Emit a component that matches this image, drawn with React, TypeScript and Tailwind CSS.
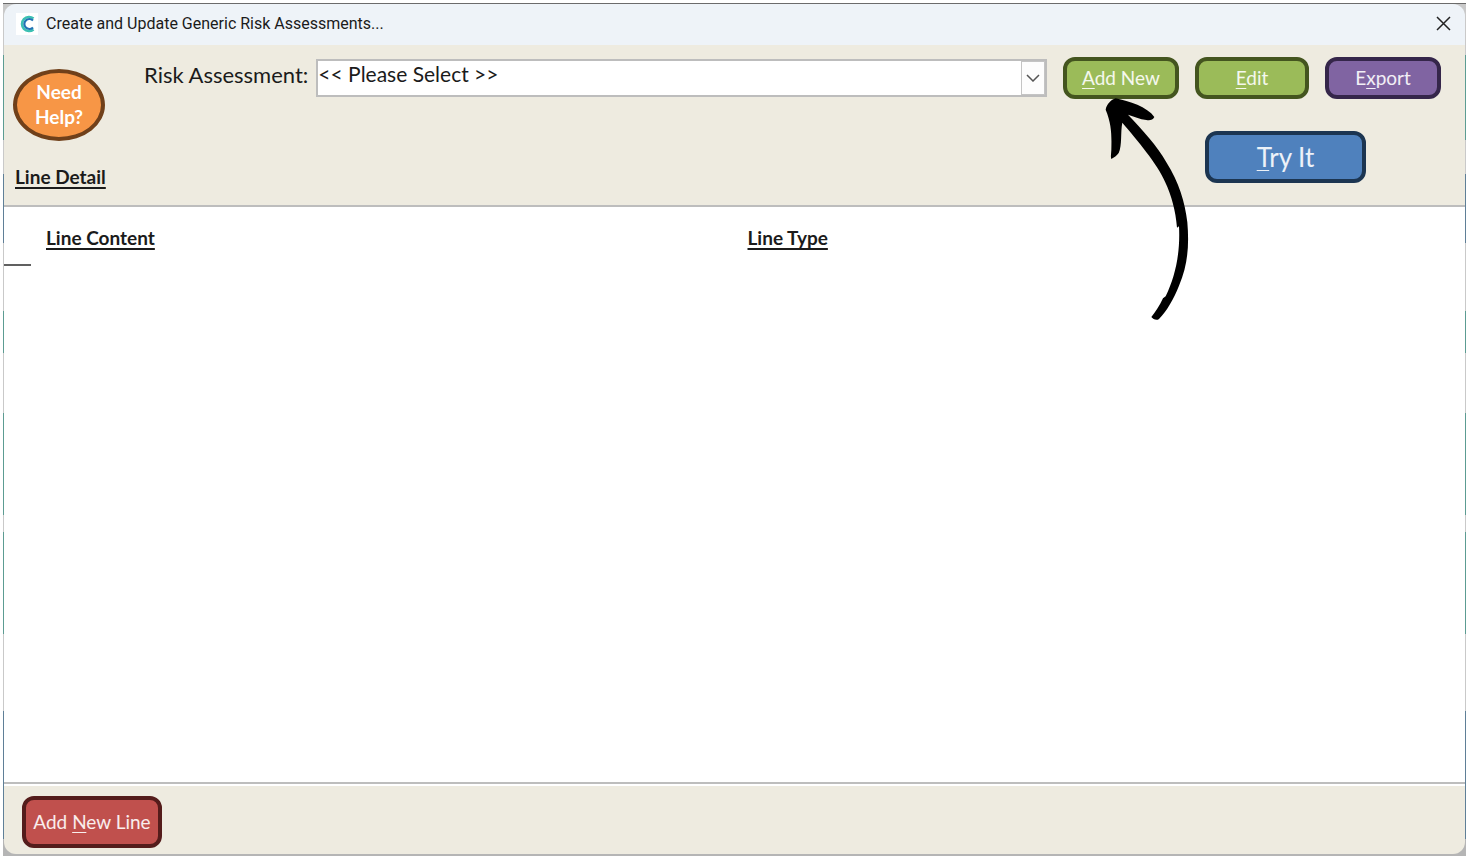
import React from "react";

interface ActionButtonProps {
  before?: string;
  accessKey: string;
  after: string;
  className: string;
}

const ActionButton: React.FC<ActionButtonProps> = ({
  before = "",
  accessKey,
  after,
  className,
}) => {
  return (
    <button
      type="button"
      accessKey={accessKey.toLowerCase()}
      className={`shrink-0 border-4 whitespace-pre text-white/90 ${className}`}
    >
      {before}
      <span className="underline decoration-1 underline-offset-3">{accessKey}</span>
      {after}
    </button>
  );
};

const TitleBar = () => {
  return (
    <header className="flex h-[41px] shrink-0 items-center bg-[#eef3f8] pr-2.5 pb-0.5 pl-3">
      <span className="flex h-[22px] w-[22px] items-center justify-center bg-white">
        <svg width="16" height="18" viewBox="0 0 16 18" fill="none">
          <path d="M14.5 3.6A7 7 0 1 0 14.5 14.4" stroke="#3cc0b3" strokeWidth="2.6" />
          <path d="M14 5.6A5 5 0 1 0 14 12.4" stroke="#2273b5" strokeWidth="2.2" />
        </svg>
      </span>
      <h1 className="ml-2 flex-1 font-['Roboto',sans-serif] text-base text-[#1b1b1b]">
        Create and Update Generic Risk Assessments...
      </h1>
      <button type="button" aria-label="Close" className="p-1">
        <svg width="15" height="15" viewBox="0 0 15 15" stroke="#222" strokeWidth="1.5">
          <path d="M1 1L14 14M14 1L1 14" />
        </svg>
      </button>
    </header>
  );
};

const PointerArrow = () => {
  return (
    <svg
      aria-hidden="true"
      className="pointer-events-none absolute top-[22px] left-4 z-10"
      width="140"
      height="260"
      viewBox="0 0 420 780"
    >
      <path d="M80 92C83 76 96 62 110 58C150 66 205 84 226 114C222 122 213 126 202 123C182 121 165 112 147 107C188 150 236 202 262 250C300 310 318 370 325 430C331 500 326 560 300 620C284 660 264 695 240 720C232 726 222 720 217 714C230 698 242 680 252 658L260 652C290 590 304 520 300 442L294 446C290 395 278 350 258 308C236 256 172 180 130 131C124 160 130 198 119 222C114 230 105 236 97 240C94 232 97 222 97 212C98 168 98 136 80 92Z" />
    </svg>
  );
};

const Toolbar = () => {
  return (
    <section className="flex shrink-0 border-b-2 border-[#bdbdbd] bg-[#eeebe0] pr-6 pl-[9px]">
      <div className="flex w-[131px] shrink-0 flex-col items-start pt-6">
        <button
          type="button"
          className="h-[72px] w-[92px] rounded-[50%] border-4 border-[#70401a] bg-[#f79646] pb-0.5 text-[19px] leading-[25px] font-bold text-white"
        >
          Need
          <br />
          Help?
        </button>
        <h2 className="mt-6 mb-4 ml-0.5 text-[19px] leading-6 font-bold whitespace-nowrap underline decoration-2 underline-offset-3">
          Line Detail
        </h2>
      </div>
      <div className="flex-1 pt-3">
        <div className="flex items-center">
          <label htmlFor="assessment" className="mr-2 mb-1.5 text-[22px] leading-7 whitespace-nowrap">
            Risk Assessment:
          </label>
          <div className="relative flex-1">
            <select
              id="assessment"
              className="block h-[38px] w-full appearance-none rounded-none border-2 border-[#bdbdbd] bg-white pb-2 text-[21px] leading-6"
            >
              <option>&lt;&lt; Please Select &gt;&gt;</option>
            </select>
            <span className="pointer-events-none absolute top-0.5 right-0.5 flex h-[34px] w-6 items-center justify-center border border-[#c4c4c4] bg-[#fdfdfd]">
              <svg width="14" height="8" viewBox="0 0 14 8" fill="none" stroke="#555" strokeWidth="1.5">
                <path d="M1 1L7 7L13 1" />
              </svg>
            </span>
          </div>
          <div className="relative ml-4 flex">
            <ActionButton
              accessKey="A"
              after="dd New"
              className="h-[42px] w-[116px] rounded-xl border-[#44551f] bg-[#9bbb59] text-[19px]"
            />
            <PointerArrow />
          </div>
          <ActionButton
            accessKey="E"
            after="dit"
            className="ml-4 h-[42px] w-[114px] rounded-xl border-[#44551f] bg-[#9bbb59] text-[19px]"
          />
          <ActionButton
            before="E"
            accessKey="x"
            after="port"
            className="ml-4 h-[42px] w-[116px] rounded-xl border-[#35264a] bg-[#8064a2] text-[19px]"
          />
        </div>
        <div className="mt-8 flex justify-end pr-[75px]">
          <ActionButton
            accessKey="T"
            after="ry It"
            className="h-[52px] w-[161px] rounded-xl border-[#1c3551] bg-[#4f81bd] text-[26px] leading-8"
          />
        </div>
      </div>
    </section>
  );
};

const LineList = () => {
  return (
    <main className="flex-1 bg-white pt-[19px]">
      <table className="w-full table-fixed text-left text-[19px] leading-6">
        <thead>
          <tr>
            <th className="w-1/2 pl-[42px] font-bold underline decoration-2 underline-offset-3">
              Line Content
            </th>
            <th className="pl-[13px] font-bold underline decoration-2 underline-offset-3">
              Line Type
            </th>
          </tr>
        </thead>
      </table>
      <div className="mt-3.5 h-0.5 w-[27px] bg-[#606060]" />
    </main>
  );
};

export default function App() {
  return (
    <div className="flex min-h-screen flex-col bg-white px-[3px] pt-[3px] font-['Lato','Liberation_Sans',sans-serif] text-[#1b1b1b]">
      {/* thin strip of the desktop showing round the window */}
      <div className="flex flex-1 flex-col border-t border-[#6b6b6b] bg-[linear-gradient(#c9c9c9_6%,#5c9c92_6%_16%,#c9c9c9_16%_20%,#5f7f97_20%_28%,#c9c9c9_28%_36%,#5c9c92_36%_41%,#c9c9c9_41%_48%,#5c9c92_48%_60%,#c9c9c9_60%_62%,#5c9c92_62%_74%,#c9c9c9_74%_83%,#5f7f97_83%_98%,#b5b5b5_98%)] px-px pb-0.5">
        <div className="flex flex-1 flex-col overflow-hidden rounded-xl">
          <TitleBar />
          <Toolbar />
          <LineList />
          <footer className="shrink-0 border-t-2 border-[#bdbdbd] bg-[#eeebe0]">
            <div className="border-t-2 border-white px-[18px] pt-2.5 pb-1.5">
              <ActionButton
                before="Add "
                accessKey="N"
                after="ew Line"
                className="block h-[52px] w-[140px] rounded-xl border-[#541c1b] bg-[#c0504d] text-[19px]"
              />
            </div>
          </footer>
        </div>
      </div>
    </div>
  );
}
